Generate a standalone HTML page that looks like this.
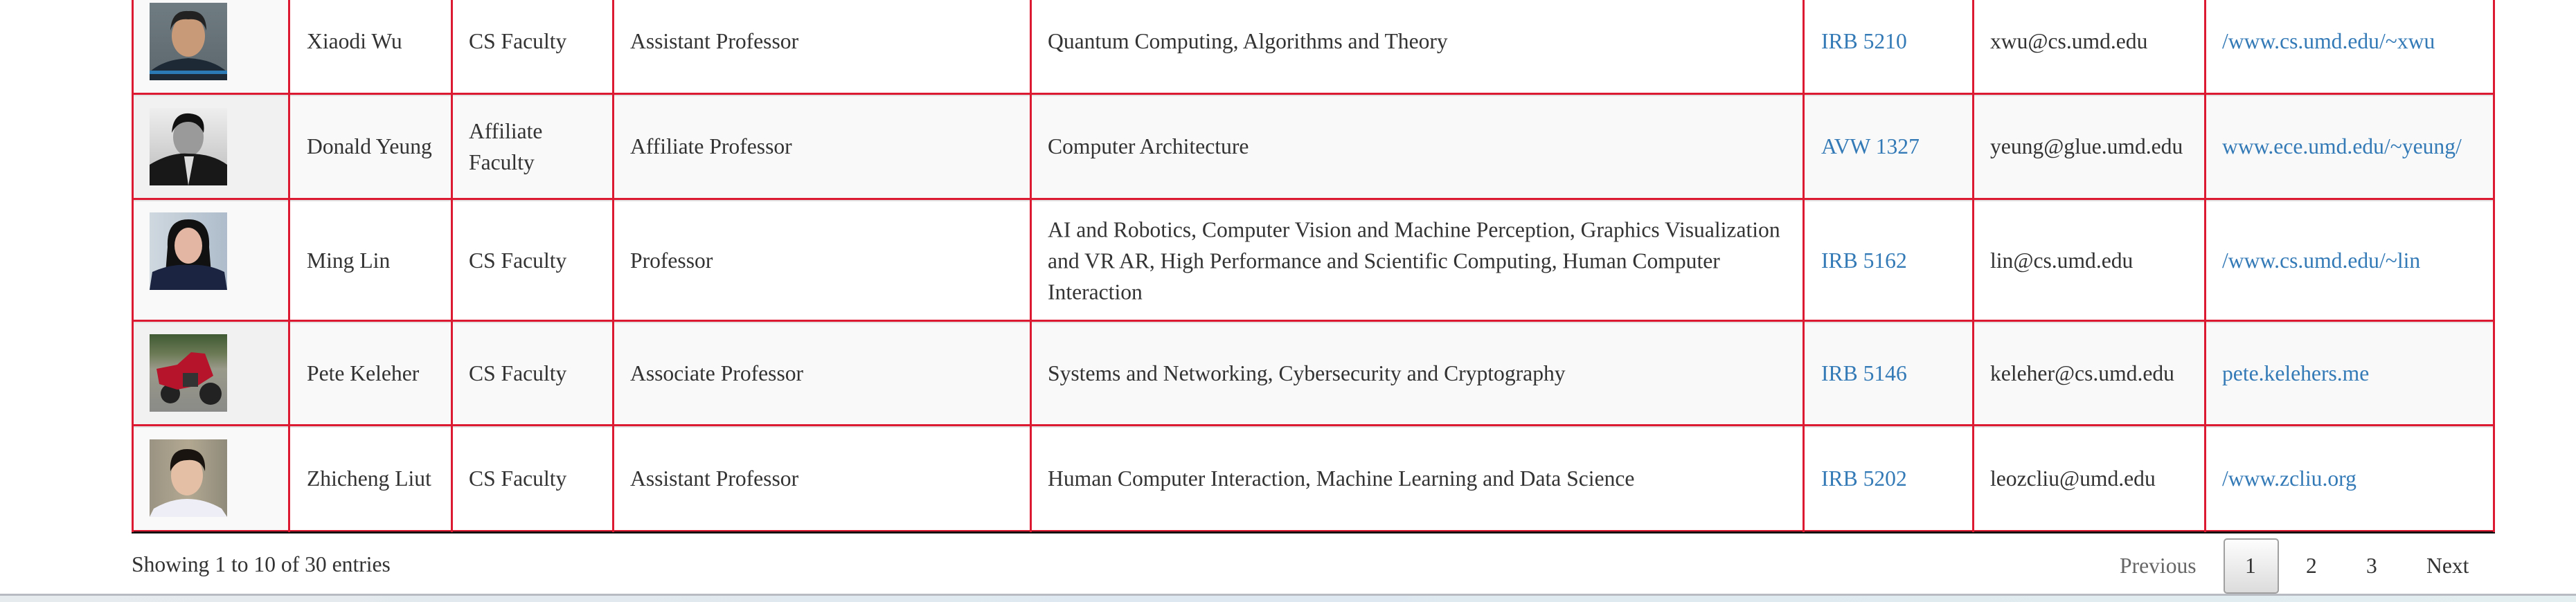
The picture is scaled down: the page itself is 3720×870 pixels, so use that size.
<!DOCTYPE html>
<html><head><meta charset="utf-8"><style>
*{margin:0;padding:0;box-sizing:border-box}
html,body{width:3720px;height:870px;overflow:hidden;background:#fff;font-family:"Liberation Serif",serif;color:#333;font-size:31.6px}
.abs{position:absolute}
.v{position:absolute;top:0;height:769px;width:3px;background:#dc1a32}
.h{position:absolute;left:190px;width:3413px;height:3px;background:#dc1a32}
.hg{position:absolute;left:190px;width:3413px;height:2px;background:#e2e2e2}
.bg{position:absolute}
.t{position:absolute;white-space:nowrap;line-height:46px;transform:translateY(-50%)}
a,.l{color:#337ab7;text-decoration:none}
.img{position:absolute;left:216px;width:112px;height:112px;overflow:hidden}
</style></head><body>
<div class="bg" style="left:190px;top:0;width:3413px;height:135px;background:#fff"></div>
<div class="bg" style="left:190px;top:137px;width:3413px;height:150px;background:#f9f9f9"></div>
<div class="bg" style="left:190px;top:465px;width:3413px;height:149px;background:#f9f9f9"></div>
<div class="bg" style="left:190px;top:0;width:228px;height:135px;background:#f9f9f9"></div>
<div class="bg" style="left:190px;top:137px;width:228px;height:150px;background:#f1f1f1"></div>
<div class="bg" style="left:190px;top:289px;width:228px;height:174px;background:#f9f9f9"></div>
<div class="bg" style="left:190px;top:465px;width:228px;height:149px;background:#f1f1f1"></div>
<div class="bg" style="left:190px;top:616px;width:228px;height:151px;background:#f9f9f9"></div>

<div class="hg" style="top:137px"></div><div class="h" style="top:134px"></div>
<div class="hg" style="top:289px"></div><div class="h" style="top:286px"></div>
<div class="hg" style="top:465px"></div><div class="h" style="top:462px"></div>
<div class="hg" style="top:616px"></div><div class="h" style="top:613px"></div>
<div class="h" style="top:766px"></div>
<div class="abs" style="left:190px;top:768px;width:3413px;height:3px;background:#111"></div>

<div class="v" style="left:190px"></div>
<div class="v" style="left:416px"></div>
<div class="v" style="left:651px"></div>
<div class="v" style="left:884px"></div>
<div class="v" style="left:1487px"></div>
<div class="v" style="left:2603px"></div>
<div class="v" style="left:2848px"></div>
<div class="v" style="left:3183px"></div>
<div class="v" style="left:3600px"></div>

<div class="img" style="top:4px;background:linear-gradient(#6f7c82,#5c676d)">
<svg width="112" height="112"><ellipse cx="56" cy="48" rx="24" ry="30" fill="#c99a78"/><path d="M30 40 Q32 10 56 12 Q82 10 82 40 Q76 22 56 24 Q36 22 30 40Z" fill="#222"/><path d="M0 112 L0 100 Q20 82 56 80 Q92 82 112 100 L112 112Z" fill="#1d2a36"/><rect x="0" y="98" width="112" height="5" fill="#2c7ab5"/></svg></div>
<div class="img" style="top:156px;background:linear-gradient(#eee,#bbb)">
<svg width="112" height="112"><ellipse cx="56" cy="42" rx="22" ry="28" fill="#9a9a9a"/><path d="M32 36 Q34 6 58 8 Q82 10 78 36 Q70 20 56 20 Q40 20 32 36Z" fill="#111"/><path d="M0 112 L0 82 Q30 64 56 66 Q90 66 112 82 L112 112Z" fill="#181818"/><path d="M50 70 L56 112 L64 70Z" fill="#ddd"/></svg></div>
<div class="img" style="top:307px;background:linear-gradient(90deg,#cfd8df,#aebccb)">
<svg width="112" height="112"><path d="M26 50 Q24 10 56 10 Q88 10 86 50 L90 100 L22 100Z" fill="#111"/><ellipse cx="56" cy="48" rx="20" ry="26" fill="#e2b6a2"/><path d="M0 112 L4 86 Q30 74 56 76 Q84 74 108 86 L112 112Z" fill="#1b2440"/></svg></div>
<div class="img" style="top:483px;background:linear-gradient(#3f5a34 0,#6b7a55 25%,#9a9a8a 45%,#8a8a88 100%)">
<svg width="112" height="112"><circle cx="30" cy="86" r="14" fill="#222"/><circle cx="88" cy="86" r="16" fill="#222"/><path d="M10 50 L40 44 L60 26 L80 28 L92 60 L70 74 L40 80 L14 72Z" fill="#b5142a"/><rect x="48" y="56" width="22" height="20" fill="#333"/></svg></div>
<div class="img" style="top:635px;background:linear-gradient(90deg,#9b9383,#b3a992,#8f8a7a)">
<svg width="112" height="112"><ellipse cx="54" cy="52" rx="23" ry="29" fill="#e4bfa6"/><path d="M30 46 Q28 14 54 14 Q82 14 80 46 Q74 28 54 30 Q38 30 30 46Z" fill="#1a1410"/><path d="M0 112 L6 100 Q30 86 54 86 Q80 86 104 100 L112 112Z" fill="#eeeef6"/></svg></div>

<div class="t" style="left:443px;top:60px">Xiaodi Wu</div>
<div class="t" style="left:677px;top:60px">CS Faculty</div>
<div class="t" style="left:910px;top:60px">Assistant Professor</div>
<div class="t" style="left:1513px;top:60px">Quantum Computing, Algorithms and Theory</div>
<div class="t l" style="left:2630px;top:60px">IRB 5210</div>
<div class="t" style="left:2874px;top:60px">xwu@cs.umd.edu</div>
<div class="t l" style="left:3209px;top:60px">/www.cs.umd.edu/~xwu</div>

<div class="t" style="left:443px;top:212px">Donald Yeung</div>
<div class="t" style="left:677px;top:212px;white-space:normal;line-height:45px">Affiliate<br>Faculty</div>
<div class="t" style="left:910px;top:212px">Affiliate Professor</div>
<div class="t" style="left:1513px;top:212px">Computer Architecture</div>
<div class="t l" style="left:2630px;top:212px">AVW 1327</div>
<div class="t" style="left:2874px;top:212px">yeung@glue.umd.edu</div>
<div class="t l" style="left:3209px;top:212px">www.ece.umd.edu/~yeung/</div>

<div class="t" style="left:443px;top:377px">Ming Lin</div>
<div class="t" style="left:677px;top:377px">CS Faculty</div>
<div class="t" style="left:910px;top:377px">Professor</div>
<div class="t" style="left:1513px;top:377px;line-height:45px">AI and Robotics, Computer Vision and Machine Perception, Graphics Visualization<br>and VR AR, High Performance and Scientific Computing, Human Computer<br>Interaction</div>
<div class="t l" style="left:2630px;top:377px">IRB 5162</div>
<div class="t" style="left:2874px;top:377px">lin@cs.umd.edu</div>
<div class="t l" style="left:3209px;top:377px">/www.cs.umd.edu/~lin</div>

<div class="t" style="left:443px;top:540px">Pete Keleher</div>
<div class="t" style="left:677px;top:540px">CS Faculty</div>
<div class="t" style="left:910px;top:540px">Associate Professor</div>
<div class="t" style="left:1513px;top:540px">Systems and Networking, Cybersecurity and Cryptography</div>
<div class="t l" style="left:2630px;top:540px">IRB 5146</div>
<div class="t" style="left:2874px;top:540px">keleher@cs.umd.edu</div>
<div class="t l" style="left:3209px;top:540px">pete.kelehers.me</div>

<div class="t" style="left:443px;top:692px">Zhicheng Liut</div>
<div class="t" style="left:677px;top:692px">CS Faculty</div>
<div class="t" style="left:910px;top:692px">Assistant Professor</div>
<div class="t" style="left:1513px;top:692px">Human Computer Interaction, Machine Learning and Data Science</div>
<div class="t l" style="left:2630px;top:692px">IRB 5202</div>
<div class="t" style="left:2874px;top:692px">leozcliu@umd.edu</div>
<div class="t l" style="left:3209px;top:692px">/www.zcliu.org</div>

<div class="t" style="left:190px;top:816px">Showing 1 to 10 of 30 entries</div>
<div class="t" style="left:3061px;top:818px;color:#666">Previous</div>
<div class="abs" style="left:3211px;top:778px;width:80px;height:80px;border:2px solid #a0a0a0;border-radius:5px;background:linear-gradient(#fdfdfd,#dcdcdc)"></div>
<div class="t" style="left:3242px;top:818px">1</div>
<div class="t" style="left:3330px;top:818px">2</div>
<div class="t" style="left:3417px;top:818px">3</div>
<div class="t" style="left:3504px;top:818px">Next</div>
<div class="abs" style="left:0;top:858px;width:3720px;height:3px;background:#b8bcc2"></div>
<div class="abs" style="left:0;top:861px;width:3720px;height:9px;background:linear-gradient(90deg,#e6ebee,#dde8f0,#e2eef0)"></div>
</body></html>
